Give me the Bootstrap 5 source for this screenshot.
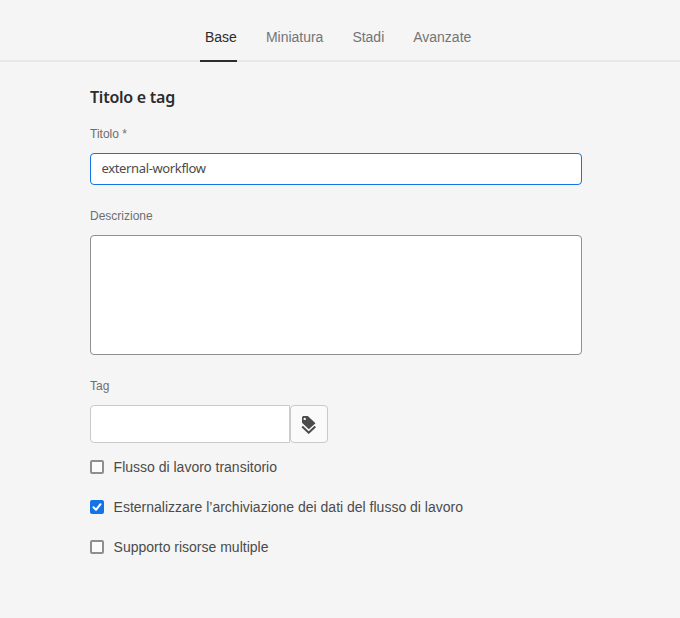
<!DOCTYPE html>
<html lang="it">
<head>
<meta charset="utf-8">
<meta name="viewport" content="width=device-width, initial-scale=1">
<title>Titolo e tag</title>
<link href="https://cdn.jsdelivr.net/npm/bootstrap@5.3.0/dist/css/bootstrap.min.css" rel="stylesheet">
<style>
body{background:#f5f5f5;color:#4b4b4b;font-family:"Liberation Sans",Arial,sans-serif;font-size:14px;line-height:20px;min-height:618px}
.tabs-bar{height:62px;border-bottom:2px solid #e8e8e8;padding-left:200px;gap:24px}
.tabs-bar .nav-link{height:62px;padding:27px 0 0 5px;color:#747474;line-height:20px;letter-spacing:-.01px;border-bottom:2px solid transparent}
.tabs-bar .nav-link.active{color:#2c2c2c;border-bottom-color:#2c2c2c}
.form-area{width:492px;margin-left:90px;padding-top:24px}
.section-title{font:600 16px/22px "Noto Sans",sans-serif;color:#2c2c2c;letter-spacing:-.25px;margin-bottom:18px}
.field-label{display:block;font-size:12px;line-height:16px;color:#6e6e6e;margin-bottom:11px}
.field-block{margin-bottom:23px}
.form-area .form-control{border-radius:4px;border-color:#909090;box-shadow:none;color:#4b4b4b;resize:none}
.form-area .title-input{height:32px;padding:0 10.5px 2px;border-color:#1473e6;font:13px "Noto Sans",sans-serif;letter-spacing:-.36px}
.form-area .desc-input{height:120px}
.tag-group{width:238px;height:38px;margin-bottom:14px}
.form-area .tag-group .form-control{border-color:#cacaca}
.tag-group .btn{width:38px;background:#fafafa;border-color:#cacaca;border-radius:4px!important;margin-left:0!important}
.tag-group svg{margin-top:1px}
.option{height:20px;gap:9.6px;margin-bottom:20px}
.option .form-check-input{width:14px;height:14px;border:2px solid #8e8e8e;border-radius:2px;background-color:#fafafa}
.option .form-check-input:checked{background-color:#1473e6;border-color:#1473e6;background-image:url("data:image/svg+xml,%3Csvg xmlns='http://www.w3.org/2000/svg' viewBox='0 0 14 14'%3E%3Cpath fill='none' stroke='white' stroke-width='2' stroke-linecap='round' stroke-linejoin='round' d='m3.5 7.3 2.5 2.6 4.5-5.7'/%3E%3C/svg%3E");background-size:14px 14px;background-origin:border-box;background-position:center}
</style>
<script src="https://cdn.jsdelivr.net/npm/bootstrap@5.3.0/dist/js/bootstrap.bundle.min.js" defer></script>
</head>
<body>
<nav class="nav tabs-bar flex-nowrap">
  <a class="nav-link active" href="#">Base</a>
  <a class="nav-link" href="#">Miniatura</a>
  <a class="nav-link" href="#">Stadi</a>
  <a class="nav-link" href="#">Avanzate</a>
</nav>
<form class="form-area">
  <h2 class="section-title">Titolo e tag</h2>
  <div class="field-block">
    <label class="field-label" for="t">Titolo *</label>
    <input id="t" class="form-control title-input" value="external-workflow">
  </div>
  <div class="field-block">
    <label class="field-label" for="d">Descrizione</label>
    <textarea id="d" class="form-control desc-input d-block"></textarea>
  </div>
  <label class="field-label" for="g">Tag</label>
  <div class="input-group tag-group">
    <input id="g" class="form-control">
    <button class="btn p-0 d-flex align-items-center justify-content-center" type="button" aria-label="Tag">
      <svg width="16" height="18" viewBox="0 0 16 18"><path fill="#4b4b4b" fill-rule="evenodd" d="M1 1.2 2 0h4.8l7.7 7.2-6.7 6L1 6.8zM3.7 1.7a1.2 1.2 0 1 0 0 2.4 1.2 1.2 0 0 0 0-2.4z"/><path fill="none" stroke="#4b4b4b" stroke-width="2" d="m1.2 10.6 6.5 6.1 6.6-6.1"/></svg>
    </button>
  </div>
  <div class="option d-flex align-items-center">
    <input class="form-check-input m-0 flex-shrink-0" type="checkbox" id="c1"><label for="c1">Flusso di lavoro transitorio</label>
  </div>
  <div class="option d-flex align-items-center">
    <input class="form-check-input m-0 flex-shrink-0" type="checkbox" id="c2" checked><label for="c2">Esternalizzare l’archiviazione dei dati del flusso di lavoro</label>
  </div>
  <div class="option d-flex align-items-center">
    <input class="form-check-input m-0 flex-shrink-0" type="checkbox" id="c3"><label for="c3">Supporto risorse multiple</label>
  </div>
</form>
</body>
</html>
